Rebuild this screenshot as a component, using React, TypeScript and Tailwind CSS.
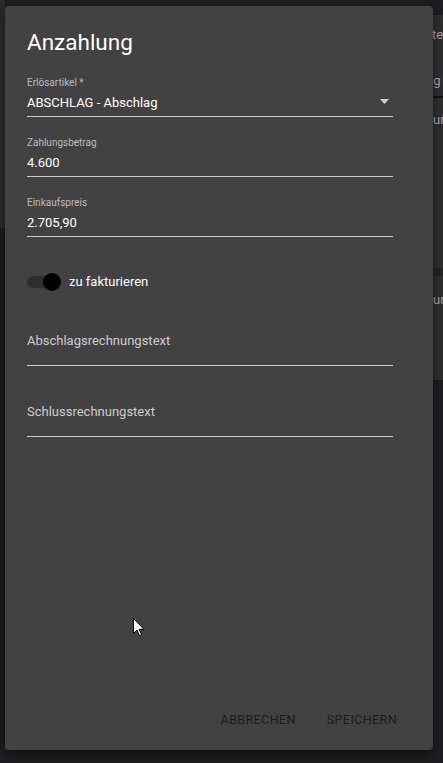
function Field({ label, value }: { label: string; value: string }) {
  return (
    <div className="flex flex-col border-b border-[#cfcfcf] pb-[5px]">
      <span className="text-[10px] leading-[12px] text-[#bdbdbd]">{label}</span>
      <span className="mt-[6px] text-[13px] leading-[16px] text-white">{value}</span>
    </div>
  );
}

function TextArea({ label }: { label: string }) {
  return (
    <div className="flex flex-col border-b border-[#cfcfcf] pb-[16px]">
      <span className="text-[13px] leading-[16px] text-[#cdcdcd]">{label}</span>
    </div>
  );
}

export default function App() {
  return (
    <div
      className="relative flex h-[763px] w-[443px] overflow-hidden bg-[#1e1e22]"
      style={{ fontFamily: "Roboto, 'Liberation Sans', sans-serif" }}
    >
      {/* page behind the dialog */}
      <div className="flex w-[5px] flex-col">
        <div className="h-[228px] bg-[#2b2b2e]" />
      </div>
      <div className="flex-1" />
      <div className="flex w-[10px] flex-col overflow-hidden text-[13px] leading-[16px] text-[#a8a8ac]">
        <div className="h-[15px]" />
        <div className="flex h-[253px] flex-col bg-[#2f2f31]">
          <span className="mt-[12px] -ml-[1px]">te</span>
          <span className="mt-[30px] -ml-[3px]">ig</span>
          <div className="mt-[7px] h-[2px] bg-[#111]" />
          <span className="mt-[14px]">ur</span>
        </div>
        <div className="h-[8px] bg-[#252527]" />
        <div className="flex h-[104px] flex-col bg-[#2f2f31]">
          <span className="mt-[16px]">ur</span>
        </div>
      </div>

      {/* dialog */}
      <div className="absolute left-[5px] top-[6px] flex h-[744px] w-[428px] flex-col rounded-[4px] bg-[#424242] px-[22px] shadow-[0_4px_12px_rgba(0,0,0,0.5)]">
        <h1 className="mt-[22px] text-[22.5px] leading-[28px] text-white">Anzahlung</h1>

        <div className="mr-[18px] mt-[21px] flex flex-col gap-[20px]">
          <div className="relative">
            <Field label="Erlösartikel *" value="ABSCHLAG - Abschlag" />
            <svg
              className="absolute right-[4px] top-[22px]"
              width="9"
              height="5"
              viewBox="0 0 9 5"
            >
              <path d="M0 0 L9 0 L4.5 5 Z" fill="#d0d0d0" />
            </svg>
          </div>
          <Field label="Zahlungsbetrag" value="4.600" />
          <Field label="Einkaufspreis" value="2.705,90" />
        </div>

        <div className="mt-[36px] flex items-center">
          <div className="relative h-[18px] w-[34px]">
            <div className="absolute left-0 top-[3px] h-[12px] w-[30px] rounded-full bg-[#2e2e2e]" />
            <div className="absolute left-[16px] top-0 h-[18px] w-[18px] rounded-full bg-black" />
          </div>
          <span className="ml-[8px] text-[13px] leading-[16px] text-white">zu fakturieren</span>
        </div>

        <div className="mr-[18px] mt-[42px] flex flex-col gap-[38px]">
          <TextArea label="Abschlagsrechnungstext" />
          <TextArea label="Schlussrechnungstext" />
        </div>

        <div className="mt-auto mb-[23px] flex justify-end gap-[31px] pr-[14px] text-[12.5px] leading-[14px] tracking-[0.4px] text-[#1c1c1c]">
          <span>ABBRECHEN</span>
          <span>SPEICHERN</span>
        </div>
      </div>

      {/* mouse cursor */}
      <svg className="absolute left-[133px] top-[618px]" width="12" height="19" viewBox="0 0 12 19">
        <path d="M0.5 0.5 L0.5 15.5 L4 12 L6.5 17.8 L8.6 16.9 L6.2 11.3 L11 11.3 Z" fill="white" stroke="black" strokeWidth="1" />
      </svg>
    </div>
  );
}
